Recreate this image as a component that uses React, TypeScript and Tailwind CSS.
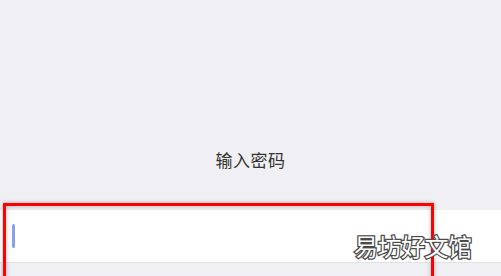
import React from 'react';

export default function App() {
  return (
    <div className="relative h-[276px] w-[501px] overflow-hidden bg-[#efeff4] font-['Noto_Sans_CJK_SC',sans-serif]">
      {/* Title */}
      <div className="flex h-[210px] items-start justify-center pt-[148px]">
        <span className="text-[17px] leading-[24px] tracking-[0.5px] text-[#333333]">输入密码</span>
      </div>

      {/* Password input row */}
      <div className="flex h-[53px] items-center border-b border-[#e2e2e6] bg-white pl-3">
        <div className="h-[24px] w-[3px] rounded-full bg-[#86a2ea]" />
      </div>

      {/* Annotation box */}
      <div className="absolute left-[3px] top-[203px] h-[90px] w-[431px] border-[3px] border-[#ff0000] shadow-[0_0_4px_rgba(0,0,0,0.3),inset_0_0_5px_rgba(0,0,0,0.25)]" />

      {/* Watermark */}
      <div className="absolute left-[354px] top-[230px] text-[24px] leading-[32px] tracking-[-0.5px] text-white [-webkit-text-stroke:2.5px_#4a4a4a] [paint-order:stroke_fill]">
        易坊好文馆
      </div>
    </div>
  );
}
